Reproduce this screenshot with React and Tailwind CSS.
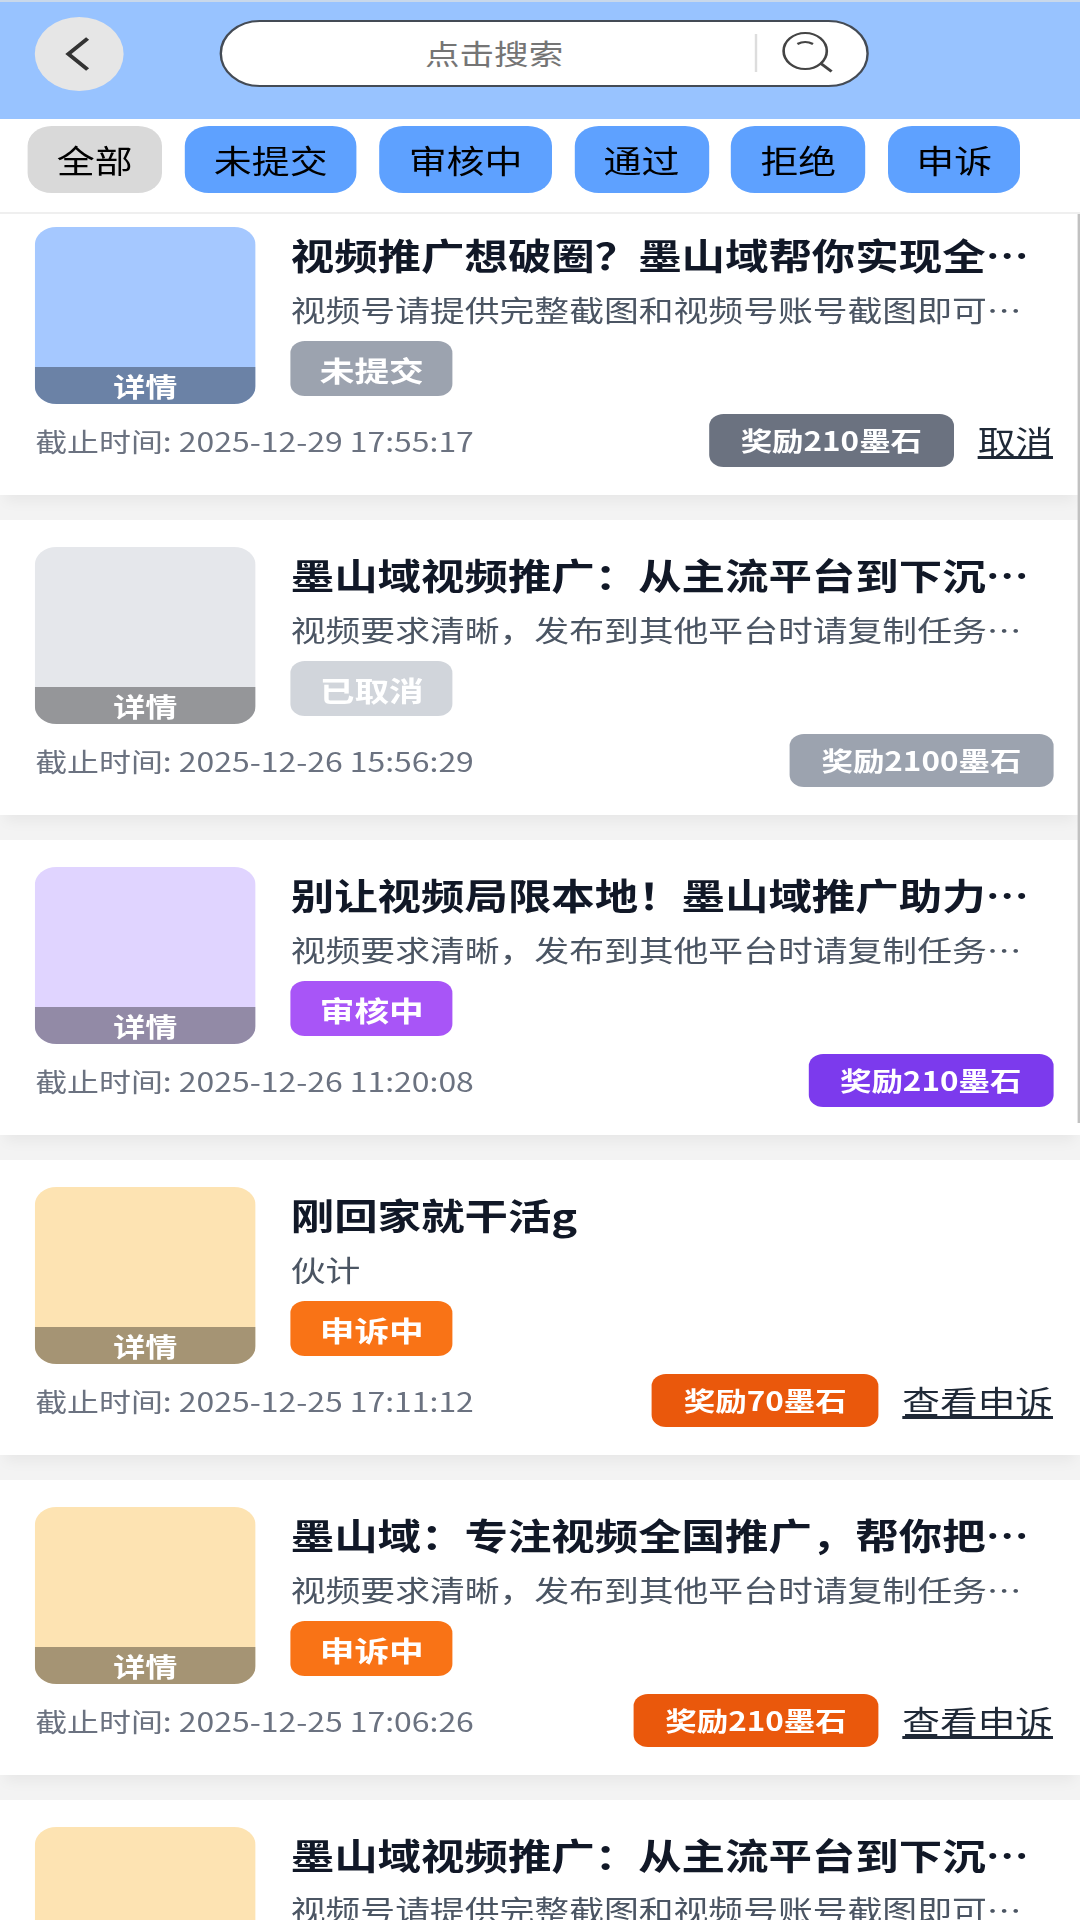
import { useState } from 'react';

const tabs = ['全部', '未提交', '审核中', '通过', '拒绝', '申诉'];

const tasks = [
  {
    id: 1,
    title: '视频推广想破圈？墨山域帮你实现全…',
    desc: '视频号请提供完整截图和视频号账号截图即可…',
    status: '未提交',
    time: '2025-12-29 17:55:17',
    reward: 210,
    action: '取消',
    thumb: 'bg-[#a5c8ff]',
    badge: 'bg-[#9ca3af]',
    button: 'bg-[#6b7280]',
  },
  {
    id: 2,
    title: '墨山域视频推广：从主流平台到下沉…',
    desc: '视频要求清晰，发布到其他平台时请复制任务…',
    status: '已取消',
    time: '2025-12-26 15:56:29',
    reward: 2100,
    thumb: 'bg-[#e5e7eb]',
    badge: 'bg-[#d1d5db]',
    button: 'bg-[#9ca3af]',
  },
  {
    id: 3,
    title: '别让视频局限本地！墨山域推广助力…',
    desc: '视频要求清晰，发布到其他平台时请复制任务…',
    status: '审核中',
    time: '2025-12-26 11:20:08',
    reward: 210,
    thumb: 'bg-[#e0d4ff]',
    badge: 'bg-[#a855f7]',
    button: 'bg-[#7c3aed]',
  },
  {
    id: 4,
    title: '刚回家就干活g',
    desc: '伙计',
    status: '申诉中',
    time: '2025-12-25 17:11:12',
    reward: 70,
    action: '查看申诉',
    thumb: 'bg-[#fde3b2]',
    badge: 'bg-[#f97316]',
    button: 'bg-[#ea580c]',
  },
  {
    id: 5,
    title: '墨山域：专注视频全国推广，帮你把…',
    desc: '视频要求清晰，发布到其他平台时请复制任务…',
    status: '申诉中',
    time: '2025-12-25 17:06:26',
    reward: 210,
    action: '查看申诉',
    thumb: 'bg-[#fde3b2]',
    badge: 'bg-[#f97316]',
    button: 'bg-[#ea580c]',
  },
  {
    id: 6,
    title: '墨山域视频推广：从主流平台到下沉…',
    desc: '视频号请提供完整截图和视频号账号截图即可…',
    thumb: 'bg-[#fde3b2]',
  },
];

function Header() {
  return (
    <header className="flex h-[119px] shrink-0 items-start border-t-2 border-[#c9d8ea] bg-[#98c3ff] pt-[14.5px] pl-[29px]">
      <button className="flex size-[74px] items-center justify-center rounded-full bg-[#e6e6e6]">
        <svg width="24" height="36" viewBox="0 0 24 36" fill="none" stroke="#333" strokeWidth="3.6">
          <path d="M19 2.5 3 18l16 15.5" />
        </svg>
      </button>
      <div className="mt-[3px] ml-[80px] flex h-[67px] w-[540.5px] items-center rounded-full border-[2.4px] border-[#444b55] bg-white">
        <span className="flex-1 pl-[10px] text-center text-[28.8px] text-[#757575]">点击搜索</span>
        <span className="h-[38px] w-[2px] bg-[#dddddd]" />
        <svg className="mr-[27px] ml-[18px]" width="46" height="44" viewBox="0 0 46 44" fill="none" stroke="#444" strokeWidth="2.2">
          <circle cx="22" cy="20" r="18" />
          <path d="M34.5 32 44 40.500" strokeWidth="2.6" />
          <path d="M15.500 13q6.500-4 13 0" />
        </svg>
      </div>
    </header>
  );
}

function TaskCard({ task }) {
  return (
    <div className="mb-[24.5px] h-[295.5px] bg-white pt-[27.5px] pr-[22.5px] pl-[29.3px] shadow-[0_10px_12px_-4px_rgba(0,0,0,0.05)]">
      <div className="flex">
        <div className="flex h-[176.5px] w-[183.5px] shrink-0 flex-col justify-end overflow-hidden rounded-[18px]">
          <div className={`flex flex-1 flex-col justify-end ${task.thumb}`}>
            <div className="h-[37px] bg-black/35 text-center text-[26.7px] leading-[37px] font-bold text-white">详情</div>
          </div>
        </div>
        <div className="ml-[29.5px] flex min-w-0 flex-1 flex-col items-start whitespace-nowrap">
          <h3 className="-mt-[1.5px] text-[36.2px] leading-[56px] font-bold text-[#111827]">{task.title}</h3>
          <p className="mt-[5.5px] text-[29px] leading-[44px] text-[#4b5563]">{task.desc}</p>
          {task.status && (
            <span className={`mt-[9.5px] h-[55px] w-[135px] rounded-[12px] text-center text-[28.9px] leading-[56px] font-bold text-white ${task.badge}`}>
              {task.status}
            </span>
          )}
        </div>
      </div>
      {task.time && (
        <div className="mt-[10.5px] flex h-[53px] items-center justify-between whitespace-nowrap">
          <span className="text-[26.6px] text-[#6b7280]">截止时间: {task.time}</span>
          <div className="flex items-center gap-[20px]">
            <span className={`h-[53px] rounded-[12px] px-[26.4px] text-[26.2px] leading-[53px] font-bold text-white ${task.button}`}>
              奖励{task.reward}墨石
            </span>
            {task.action && (
              <a className="text-[31.4px] leading-[52px] text-[#1f2937] underline">{task.action}</a>
            )}
          </div>
        </div>
      )}
    </div>
  );
}

export default function App() {
  const [activeTab, setActiveTab] = useState('全部');

  return (
    <div className="h-[1920px] w-[1080px] overflow-hidden bg-white">
      <div
        lang="zh-CN"
        className="flex h-[1920px] w-[900px] origin-top-left scale-x-[1.2] flex-col overflow-hidden font-['Noto_Sans_CJK_SC',sans-serif]"
      >
        <Header />

        {/* 状态筛选 */}
        <div className="flex h-[95px] shrink-0 gap-[18.8px] border-b-2 border-[#efefef] pt-[6.5px] pl-[23px]">
          {tabs.map((tab) => (
            <button
              key={tab}
              onClick={() => setActiveTab(tab)}
              className={`h-[67.5px] rounded-[20px] px-[24.4px] text-[31.6px] leading-[66px] text-black last:px-[23.5px] ${
                activeTab === tab ? 'bg-[#d9d9d9]' : 'bg-[#5ea1ff]'
              }`}
            >
              {tab}
            </button>
          ))}
        </div>

        {/* 任务列表 */}
        <div className="relative min-h-0 flex-1 overflow-hidden bg-[#f3f3f3]">
          <div className="-mt-[14.5px]">
            {tasks.map((task) => (
              <TaskCard key={task.id} task={task} />
            ))}
          </div>
          <div className="absolute top-0 right-0 h-[909px] w-[2px] bg-[#c1c1c1]" />
        </div>
      </div>
    </div>
  );
}
